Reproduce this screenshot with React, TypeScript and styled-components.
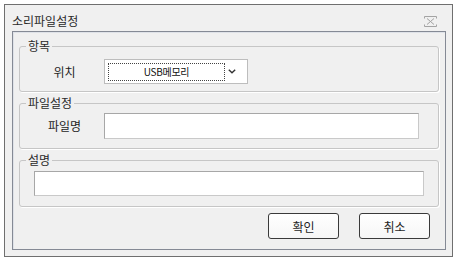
import React from "react";
import styled, { createGlobalStyle } from "styled-components";

const GlobalStyle = createGlobalStyle`
  html, body {
    margin: 0;
    padding: 0;
    background: #ffffff;
  }
  body {
    font-family: "Noto Sans CJK KR", "Noto Sans", sans-serif;
    font-size: 12px;
    color: #1e1e1e;
  }
  * {
    box-sizing: border-box;
  }
`;

const Window = styled.div`
  display: flex;
  flex-direction: column;
  width: 449px;
  height: 253px;
  margin: 4px 0 0 4px;
  padding: 0 6px 6px 7px;
  border: 1px solid #6f6f6f;
  background-color: #f0f0f0;
`;

const TitleBar = styled.div`
  display: flex;
  align-items: center;
  justify-content: space-between;
  height: 26px;
  padding-top: 5px;
`;

const Title = styled.span`
  font-size: 12px;
  line-height: 14px;
  color: #2a2a2a;
`;

const CloseIcon = styled.svg`
  margin-right: 9px;
  margin-top: 1px;
`;

const Client = styled.div`
  display: flex;
  flex-direction: column;
  flex: 1;
  gap: 4px;
  padding: 7px 6px 0 6px;
  border: 1px solid #858a95;
  box-shadow: inset 1px 1px 0 #dfe2e8;
`;

const Group = styled.fieldset<{ $pt: number; $pb: number }>`
  margin: 0;
  min-width: 0;
  padding: ${(p) => p.$pt}px 0 ${(p) => p.$pb}px 5px;
  border: 1px solid #c6c6c6;
  border-radius: 3px;
  box-shadow: 1px 1px 0 #ffffff;
`;

const Legend = styled.legend`
  margin-left: 1px;
  padding: 0 2px;
  font-size: 12px;
  line-height: 14px;
  color: #2a2a2a;
`;

const Row = styled.div<{ $indent?: number }>`
  display: flex;
  align-items: center;
  padding-left: ${(p) => p.$indent ?? 0}px;
`;

const Label = styled.span`
  width: 79px;
  text-align: center;
  font-size: 12px;
  line-height: 14px;
  color: #1e1e1e;
`;

const Select = styled.div`
  display: flex;
  align-items: center;
  width: 144px;
  height: 25px;
  padding: 0 3px;
  border: 1px solid #bdbdbd;
  background-color: #ffffff;
`;

const SelectValue = styled.div`
  display: flex;
  align-items: center;
  justify-content: center;
  width: 117px;
  height: 18px;
  border: 1px dotted #444444;
  font-size: 10px;
  letter-spacing: -0.3px;
  color: #111111;
`;

const Chevron = styled.svg`
  margin-left: 3px;
`;

const TextInput = styled.div<{ $w: number; $h: number }>`
  width: ${(p) => p.$w}px;
  height: ${(p) => p.$h}px;
  background-color: #ffffff;
  border: 1px solid #c9c9c9;
  border-top-color: #a7a7a7;
  border-left-color: #a7a7a7;
`;

const Buttons = styled.div`
  display: flex;
  justify-content: flex-end;
  gap: 20px;
  margin-top: 2px;
  padding-right: 9px;
`;

const Button = styled.button`
  width: 71px;
  height: 26px;
  padding: 0;
  border: 1px solid #3a3a3a;
  border-radius: 3px;
  background: linear-gradient(#ffffff, #f6f6f6);
  font-family: inherit;
  font-size: 12px;
  color: #1e1e1e;
`;

const App = () => {
  return (
    <>
      <GlobalStyle />
      <Window>
        <TitleBar>
          <Title>소리파일설정</Title>
          <CloseIcon width="13" height="11" viewBox="0 0 13 11">
            <g stroke="#a3a3a3" strokeWidth="1" fill="none">
              <path d="M0.5 0.5 H12.5 M0.5 10.5 H12.5" />
              <path d="M3 2.5 L10 8.5 M10 2.5 L3 8.5" />
              <path d="M0.5 0.5 V2.5 M12.5 0.5 V2.5 M0.5 10.5 V8.5 M12.5 10.5 V8.5" />
            </g>
          </CloseIcon>
        </TitleBar>
        <Client>
          <Group $pt={6} $pb={7}>
            <Legend>항목</Legend>
            <Row>
              <Label>위치</Label>
              <Select>
                <SelectValue>USB메모리</SelectValue>
                <Chevron width="8" height="5" viewBox="0 0 8 5">
                  <path d="M0.8 0.8 L4 3.8 L7.2 0.8" stroke="#333" strokeWidth="1.4" fill="none" />
                </Chevron>
              </Select>
            </Row>
          </Group>
          <Group $pt={3} $pb={9}>
            <Legend>파일설정</Legend>
            <Row>
              <Label>파일명</Label>
              <TextInput $w={315} $h={26} />
            </Row>
          </Group>
          <Group $pt={4} $pb={10}>
            <Legend>설명</Legend>
            <Row $indent={9}>
              <TextInput $w={390} $h={25} />
            </Row>
          </Group>
          <Buttons>
            <Button>확인</Button>
            <Button>취소</Button>
          </Buttons>
        </Client>
      </Window>
    </>
  );
};

export default App;
